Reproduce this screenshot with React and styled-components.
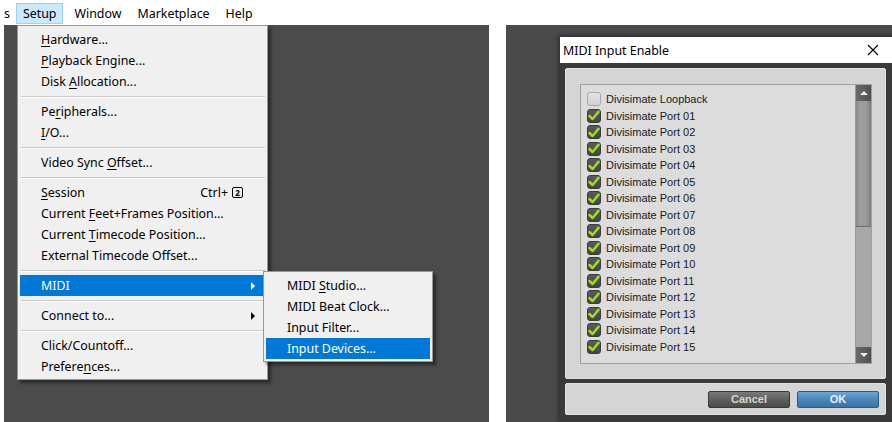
import React from 'react';
import styled, { createGlobalStyle } from 'styled-components';

const GlobalStyle = createGlobalStyle`
  html, body {
    margin: 0;
    padding: 0;
    background: #ffffff;
    width: 892px;
    height: 422px;
    overflow: hidden;
  }
  * { box-sizing: border-box; }
`;

const Page = styled.div`
  display: flex;
  gap: 17px;
  width: 892px;
  height: 422px;
`;

const LeftShot = styled.div`
  position: relative;
  display: flex;
  flex-direction: column;
  width: 489px;
  height: 422px;
`;

const MenuBar = styled.div`
  display: flex;
  align-items: flex-start;
  height: 25px;
  padding-top: 3px;
  font: 12.4px "Noto Sans", "Open Sans", sans-serif;
  color: #000;
`;

const BarItem = styled.div`
  height: 21px;
  display: flex;
  align-items: center;
  padding: 0 6px;
  margin-right: ${p => p.$gap || 0}px;
  background: ${p => (p.$open ? '#cce8ff' : 'transparent')};
  border: 1px solid ${p => (p.$open ? '#99d1ff' : 'transparent')};
`;

const Canvas = styled.div`
  flex: 1;
  margin-left: 4px;
  background: #4b4b4b;
`;

const Menu = styled.div`
  position: absolute;
  left: ${p => p.$left}px;
  top: ${p => p.$top}px;
  width: ${p => p.$width}px;
  padding: 3px 2px 2px;
  background: #f0f0f0;
  border: 1px solid #979797;
  box-shadow: 3px 3px 3px rgba(0, 0, 0, 0.45);
  font: 12.4px "Noto Sans", "Open Sans", sans-serif;
  color: #000;
`;

const Item = styled.div`
  display: flex;
  align-items: center;
  height: 21px;
  padding-left: 21px;
  padding-right: 10px;
  background: ${p => (p.$active ? '#0078d7' : 'transparent')};
  color: ${p => (p.$active ? '#ffffff' : '#000')};
  white-space: nowrap;
`;

const Label = styled.span`
  flex: 1;
  u { text-decoration-thickness: 1px; text-underline-offset: 2px; }
`;

const Arrow = styled.span`
  width: 0;
  height: 0;
  border-top: 4px solid transparent;
  border-bottom: 4px solid transparent;
  border-left: 4px solid ${p => (p.$light ? '#fff' : '#000')};
`;

const Shortcut = styled.span`
  display: flex;
  align-items: center;
  gap: 4px;
  margin-right: 12px;
`;

const KeyBox = styled.span`
  display: inline-flex;
  align-items: center;
  justify-content: center;
  width: 11px;
  height: 11px;
  border: 1px solid #000;
  border-radius: 2px;
  font-size: 8px;
  line-height: 1;
  font-weight: bold;
`;

const Sep = styled.div`
  height: 1px;
  margin: 4px 0 3px 1px;
  background: #c8c8c8;
  border-bottom: 1px solid #fff;
  box-sizing: content-box;
`;

const RightShot = styled.div`
  margin-top: 25px;
  width: 386px;
  height: 397px;
  background: #4a4a4a;
  overflow: hidden;
  padding: 12px 0 0 54px;
`;

const Dialog = styled.div`
  display: flex;
  flex-direction: column;
  width: 340px;
  background: #3a3a3a;
  box-shadow: 0 0 4px 2px rgba(0, 0, 0, 0.35);
`;

const TitleBar = styled.div`
  display: flex;
  align-items: center;
  justify-content: space-between;
  height: 26px;
  padding: 0 0 0 3px;
  background: #fff;
  font: 12.4px "Noto Sans", "Open Sans", sans-serif;
  color: #000;
`;

const CloseX = styled.svg`
  width: 12px;
  height: 12px;
  margin-right: 21px;
`;

const Body = styled.div`
  display: flex;
  flex-direction: column;
  gap: 4px;
  padding: 5px 14px 4px 5px;
`;

const ContentPanel = styled.div`
  height: 311px;
  padding: 15px 13px 15px 14px;
  background: #d5d5d5;
  border: 1px solid #e2e2e2;
  border-radius: 2px;
`;

const ListBox = styled.div`
  display: flex;
  height: 280px;
  background: #dcdcdc;
  border: 1px solid #a0a0a0;
`;

const List = styled.div`
  flex: 1;
  padding: 6px 0 0 6px;
`;

const Row = styled.div`
  display: flex;
  align-items: center;
  gap: 5px;
  height: 16.5px;
  font: 11px "Liberation Sans", Arial, sans-serif;
  color: #1a1a1a;
`;

const Box = styled.span`
  display: inline-flex;
  align-items: center;
  justify-content: center;
  width: 14px;
  height: 14px;
  border-radius: 3px;
  background: ${p => (p.$checked ? 'linear-gradient(#5a5a5a, #454545)' : 'linear-gradient(#e4e4e4, #d0d0d0)')};
  border: 1px solid ${p => (p.$checked ? '#3c3c3c' : '#a8a8a8')};
`;

const ScrollBar = styled.div`
  display: flex;
  flex-direction: column;
  width: 16px;
  background: #a8a8a8;
  border-left: 1px solid #9a9a9a;
`;

const ScrollBtn = styled.div`
  display: flex;
  align-items: center;
  justify-content: center;
  height: 16px;
  background: linear-gradient(90deg, #6a6a6a, #505050);
`;

const Tri = styled.span`
  width: 0;
  height: 0;
  border-left: 4px solid transparent;
  border-right: 4px solid transparent;
  ${p => (p.$up ? 'border-bottom: 4px solid #eee;' : 'border-top: 4px solid #eee;')}
`;

const Thumb = styled.div`
  height: 126px;
  background: linear-gradient(90deg, #8c8c8c, #9f9f9f 30%, #9a9a9a 70%, #7c7c7c);
  border-bottom: 1px solid #6c6c6c;
`;

const Track = styled.div`
  flex: 1;
`;

const ButtonPanel = styled.div`
  display: flex;
  justify-content: flex-end;
  align-items: center;
  gap: 7px;
  height: 32px;
  padding-right: 6px;
  background: #d5d5d5;
  border: 1px solid #e2e2e2;
  border-radius: 2px;
`;

const Button = styled.div`
  display: flex;
  align-items: center;
  justify-content: center;
  width: 82px;
  height: 17px;
  border-radius: 2px;
  font: bold 11px "Liberation Sans", Arial, sans-serif;
  color: ${p => (p.$primary ? '#e6f1fa' : '#d6d6d6')};
  background: ${p =>
    p.$primary
      ? 'linear-gradient(#6aa6d6, #4a86bb 50%, #3a74a6)'
      : 'linear-gradient(#7a7a7a, #5e5e5e 50%, #4c4c4c)'};
  border: 1px solid ${p => (p.$primary ? '#2d5a82' : '#3a3a3a')};
`;

const Check = () => (
  <svg width="12" height="11" viewBox="0 0 12 11">
    <path d="M1.5 6 L4.6 9 L10.5 1.8" fill="none" stroke="#9be01a" strokeWidth="2.5" strokeLinecap="round" strokeLinejoin="round" />
  </svg>
);

const ports = ['Divisimate Loopback'].concat(
  Array.from({ length: 15 }, (_, i) => `Divisimate Port ${String(i + 1).padStart(2, '0')}`)
);

export default function App() {
  return (
    <>
      <GlobalStyle />
      <Page>
        <LeftShot>
          <MenuBar>
            <BarItem style={{ paddingLeft: 3, paddingRight: 5 }}>s</BarItem>
            <BarItem $open $gap={4}>Setup</BarItem>
            <BarItem $gap={2}>Window</BarItem>
            <BarItem $gap={2}>Marketplace</BarItem>
            <BarItem>Help</BarItem>
          </MenuBar>
          <Canvas />

          <Menu $left={17} $top={25} $width={251}>
            <Item><Label><u>H</u>ardware...</Label></Item>
            <Item><Label><u>P</u>layback Engine...</Label></Item>
            <Item><Label>Disk <u>A</u>llocation...</Label></Item>
            <Sep />
            <Item><Label>Pe<u>r</u>ipherals...</Label></Item>
            <Item><Label><u>I</u>/O...</Label></Item>
            <Sep />
            <Item><Label>Video Sync <u>O</u>ffset...</Label></Item>
            <Sep />
            <Item>
              <Label><u>S</u>ession</Label>
              <Shortcut>Ctrl+ <KeyBox>2</KeyBox></Shortcut>
            </Item>
            <Item><Label>Current <u>F</u>eet+Frames Position...</Label></Item>
            <Item><Label>Current <u>T</u>imecode Position...</Label></Item>
            <Item><Label>External Timecode Offset...</Label></Item>
            <Sep />
            <Item $active><Label>MIDI</Label><Arrow $light /></Item>
            <Sep />
            <Item><Label>Connect to...</Label><Arrow /></Item>
            <Sep />
            <Item><Label>Click/Countoff...</Label></Item>
            <Item><Label>Prefere<u>n</u>ces...</Label></Item>
          </Menu>

          <Menu $left={263} $top={271} $width={170}>
            <Item><Label>MIDI <u>S</u>tudio...</Label></Item>
            <Item><Label>MIDI Beat Clock...</Label></Item>
            <Item><Label>Input Filter...</Label></Item>
            <Item $active><Label>Input Devices...</Label></Item>
          </Menu>
        </LeftShot>

        <RightShot>
          <Dialog>
            <TitleBar>
              <span>MIDI Input Enable</span>
              <CloseX viewBox="0 0 12 12">
                <path d="M1 1 L11 11 M11 1 L1 11" stroke="#000" strokeWidth="1.1" />
              </CloseX>
            </TitleBar>
            <Body>
              <ContentPanel>
                <ListBox>
                  <List>
                    {ports.map((name, i) => (
                      <Row key={name}>
                        <Box $checked={i > 0}>{i > 0 && <Check />}</Box>
                        <span>{name}</span>
                      </Row>
                    ))}
                  </List>
                  <ScrollBar>
                    <ScrollBtn><Tri $up /></ScrollBtn>
                    <Thumb />
                    <Track />
                    <ScrollBtn><Tri /></ScrollBtn>
                  </ScrollBar>
                </ListBox>
              </ContentPanel>
              <ButtonPanel>
                <Button>Cancel</Button>
                <Button $primary>OK</Button>
              </ButtonPanel>
            </Body>
          </Dialog>
        </RightShot>
      </Page>
    </>
  );
}
